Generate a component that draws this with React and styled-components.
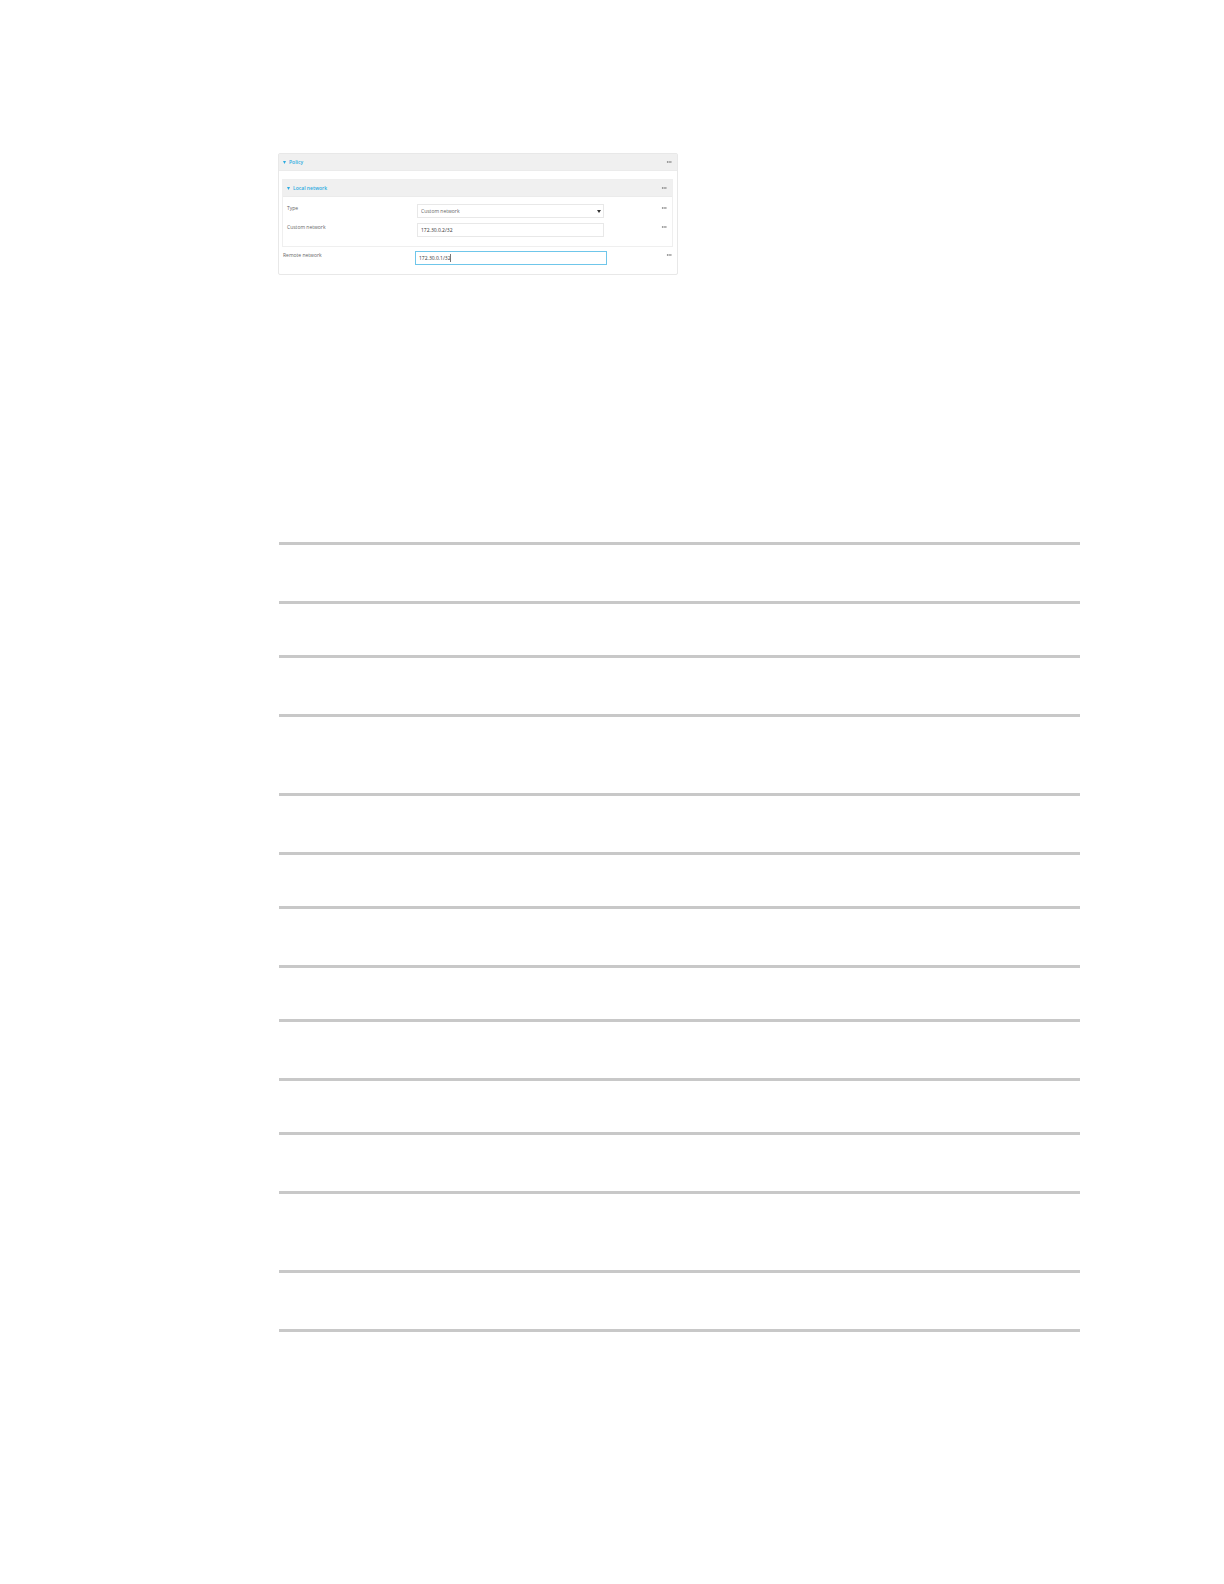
import styled, { createGlobalStyle } from "styled-components";
import { Ellipsis } from "lucide-react";


const GlobalStyle = createGlobalStyle`
    *, *::before, *::after {
        box-sizing: border-box;
    }
    body {
        margin: 0;
        background-color: #ffffff;
        color: #666666;
        font-family: "Open Sans", "Noto Sans", sans-serif;
        font-size: 5px;
        line-height: 8px;
    }
`
const StyledPage = styled.main`
    display: flex;
    flex-direction: column;
    gap: 267px;
    padding: 153px 144px 253px 278px;
`
const StyledPanel = styled.section`
    max-width: 400px;
    padding-bottom: 9px;
    border: 1px solid #e8e8e8;
    border-radius: 2px;
`
const StyledSubPanel = styled.section`
    margin: 8px 4px 4px 3px;
    padding-bottom: 9px;
    border: 1px solid #efefef;
`
const StyledPanelHeader = styled.header`
    display: flex;
    justify-content: space-between;
    align-items: center;
    height: 17px;
    margin-bottom: ${({ $spaced }) => ($spaced ? '7px' : '0')};
    padding: 0 5px 0 4px;
    background-color: #f0f0f0;
    border-bottom: 1px solid #ebebeb;
`
const StyledToggle = styled.button`
    display: flex;
    align-items: center;
    gap: 3px;
    padding: 0;
    border: none;
    background: none;
    color: #2cabe0;
    font: inherit;
    font-weight: 600;
`
const StyledMenuButton = styled.button`
    display: flex;
    align-items: center;
    height: 8px;
    padding: 0;
    border: none;
    background: none;
    color: #777777;
`
const StyledField = styled.div`
    display: flex;
    align-items: flex-start;
    padding: 0 5px 0 4px;

    & + & {
        margin-top: 5px;
    }
`
const StyledLabel = styled.label`
    flex: 0 0 ${({ $wide }) => ($wide ? '132px' : '130px')};
`
const StyledControl = styled.div`
    position: relative;
    display: flex;
    flex: 0 0 ${({ $wide }) => ($wide ? '192px' : '187px')};
    margin-right: auto;
`
const controlStyles = `
    width: 100%;
    height: 14px;
    border-radius: 0;
    background-color: #ffffff;
    font: inherit;
    outline: none;
    appearance: none;
`
const StyledSelect = styled.select`
    ${controlStyles}
    padding: 0 12px 0 3px;
    border: 1px solid #e8e8e8;
    color: #666666;
`
const StyledInput = styled.input`
    ${controlStyles}
    padding: 0 3px;
    border: 1px solid ${({ $active }) => ($active ? '#6fc6ea' : '#e8e8e8')};
    color: #333333;
`
const StyledSelectArrow = styled.svg`
    position: absolute;
    top: 6px;
    right: 3px;
    pointer-events: none;
`
const StyledCursor = styled.span`
    position: absolute;
    top: 3px;
    left: 35px;
    width: 1px;
    height: 8px;
    background-color: #777777;
`
const StyledBlocks = styled.div`
    display: flex;
    flex-direction: column;
    gap: 51px;
    margin-left: 1px;
`
const StyledBlock = styled.div`
    height: 62px;
    margin-top: ${({ $separated }) => ($separated ? '25px' : '0')};
    border-top: 3px solid #c8c8c8;
    border-bottom: 3px solid #c8c8c8;
`

const blocks = [
    { id: 1 },
    { id: 2 },
    { id: 3, separated: true },
    { id: 4 },
    { id: 5 },
    { id: 6 },
    { id: 7, separated: true },
]


const MenuButton = ({ label }) => (
    <StyledMenuButton type="button" aria-label={label}>
        <Ellipsis size={6} strokeWidth={3} />
    </StyledMenuButton>
)

const PanelHeader = ({ title, spaced }) => (
    <StyledPanelHeader $spaced={spaced}>
        <StyledToggle type="button" aria-expanded="true">
            <svg width="3" height="3" viewBox="0 0 3 3" fill="currentColor">
                <path d="M0 0H3L1.5 3Z" />
            </svg>
            {title}
        </StyledToggle>
        <MenuButton label={`${title} options`} />
    </StyledPanelHeader>
)

const App = () => {
    return (
        <>
            <GlobalStyle />
            <StyledPage>
                <StyledPanel>
                    <PanelHeader title="Policy" />
                    <StyledSubPanel>
                        <PanelHeader title="Local network" spaced />
                        <StyledField>
                            <StyledLabel htmlFor="type">Type</StyledLabel>
                            <StyledControl>
                                <StyledSelect id="type" defaultValue="custom">
                                    <option value="custom">Custom network</option>
                                </StyledSelect>
                                <StyledSelectArrow width="4" height="3" viewBox="0 0 4 3" fill="#333333">
                                    <path d="M0 0H4L2 3Z" />
                                </StyledSelectArrow>
                            </StyledControl>
                            <MenuButton label="Type options" />
                        </StyledField>
                        <StyledField>
                            <StyledLabel htmlFor="custom-network">Custom network</StyledLabel>
                            <StyledControl>
                                <StyledInput id="custom-network" defaultValue="172.30.0.2/32" />
                            </StyledControl>
                            <MenuButton label="Custom network options" />
                        </StyledField>
                    </StyledSubPanel>
                    <StyledField>
                        <StyledLabel htmlFor="remote-network" $wide>Remote network</StyledLabel>
                        <StyledControl $wide>
                            <StyledInput id="remote-network" defaultValue="172.30.0.1/32" $active />
                            <StyledCursor />
                        </StyledControl>
                        <MenuButton label="Remote network options" />
                    </StyledField>
                </StyledPanel>
                <StyledBlocks>
                    {blocks.map(({ id, separated }) => (
                        <StyledBlock key={id} $separated={separated} />
                    ))}
                </StyledBlocks>
            </StyledPage>
        </>
    )
}

export default App
